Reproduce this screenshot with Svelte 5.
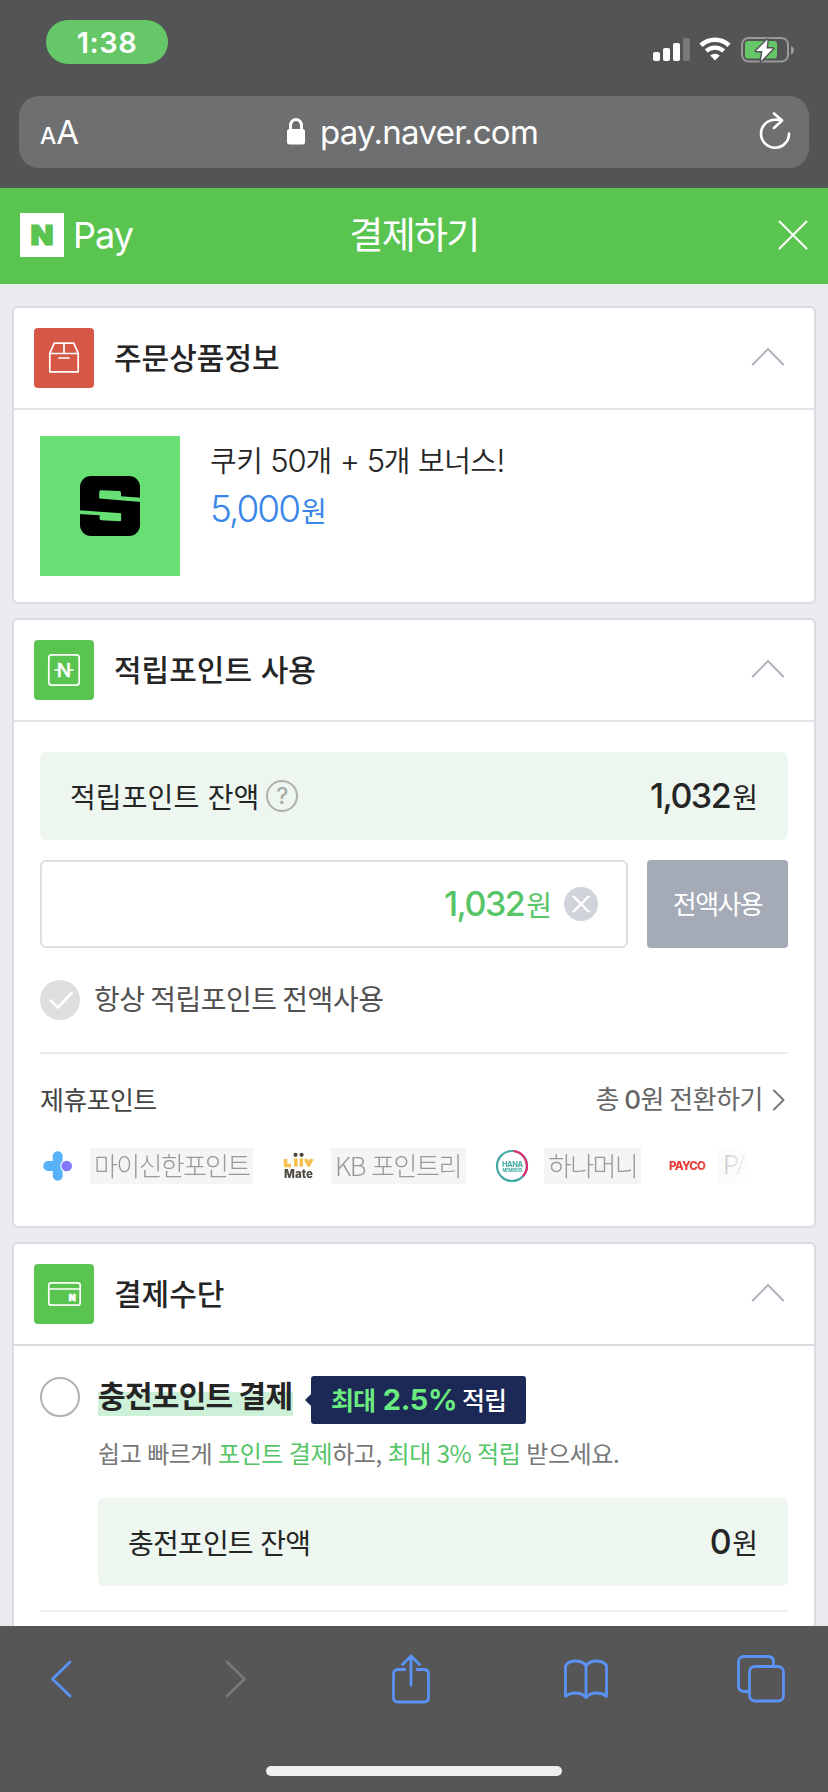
<script lang="ts">
	const signal = [9, 13, 18, 23];

	let point = $state<number>(1032);
	let always_use = $state<boolean>(true);

	const format = (value: number) => value.toLocaleString("en-US");
</script>

{#snippet arrow()}
	<svg class="arrow" width="34" height="20" viewBox="0 0 34 20">
		<path d="M2.800 17.500 18 2l15.200 15.500" />
	</svg>
{/snippet}

<div class="phone">
	<div class="status">
		<span class="time">1:38</span>
		<div class="indicators">
			<div class="signal">
				{#each signal as height, i}
					<i class:off={i === 3} style:height="{height}px"></i>
				{/each}
			</div>
			<svg class="wifi" width="32" height="24" viewBox="0 0 32 24">
				<path d="M2 8.300a20.500 20.500 0 0 1 28 0" stroke-width="4.600" />
				<path d="M7.300 14a12.800 12.800 0 0 1 17.400 0" stroke-width="4.200" />
				<path class="dot" d="M11.200 18.600a7 7 0 0 1 9.600 0L16 23.600z" />
			</svg>
			<svg class="battery" width="54" height="26" viewBox="0 0 54 26">
				<rect class="shell" x="1" y="1" width="46" height="23.500" rx="6.500" />
				<path class="cap" d="M50 9v8.500q3-1 3-4.250T50 9z" />
				<rect class="level" x="4" y="4" width="32" height="17.500" rx="3" />
				<path
					class="bolt"
					d="M26.500 2.500 15 14h6.500L20 24 32 11.500h-6.500z"
				/>
			</svg>
		</div>
	</div>

	<div class="address">
		<div class="field">
			<span class="text-size"><small>A</small>A</span>
			<div class="host">
				<svg width="18" height="27" viewBox="0 0 18 27">
					<path d="M3.500 12V7.500a5.500 6 0 0 1 11 0V12" />
					<rect x="0" y="11" width="18" height="15.500" rx="2.500" />
				</svg>
				<span>pay.naver.com</span>
			</div>
			<svg class="reload" width="32" height="38" viewBox="0 0 32 38">
				<path d="M30 21.500A14 14 0 1 1 16 7.700H22.500" />
				<path d="m15 1.500 8 7-8 7.500" />
			</svg>
		</div>
	</div>

	<header>
		<div class="logo">
			<svg width="44" height="44" viewBox="0 0 44 44">
				<rect width="44" height="44" />
				<text x="22" y="32" textLength="23" lengthAdjust="spacingAndGlyphs">N</text>
			</svg>
			<span>Pay</span>
		</div>
		<h1>결제하기</h1>
		<svg class="close" width="30" height="30" viewBox="0 0 30 30">
			<path d="m1.500 1.500 27 27m0-27-27 27" />
		</svg>
	</header>

	<main>
		<section class="card order">
			<div class="card-head">
				<div class="card-icon red">
					<svg width="60" height="60" viewBox="0 0 60 60">
						<path d="M15.800 25.500 20.200 15.200h19.600l4.400 10.300v18.300H15.800zM15.800 25.500h28.400M30 15.500v10M25 30h10" />
					</svg>
				</div>
				<h2>주문상품정보</h2>
				{@render arrow()}
			</div>
			<div class="product">
				<svg class="thumb" width="140" height="140" viewBox="0 0 140 140">
					<rect width="140" height="140" fill="#67df75" />
					<rect x="40" y="40" width="60" height="60" rx="11" fill="#000" />
					<path
						fill="#67df75"
						d="M61 54.200q-1.800 0-1.800 1.800v6.500l41.800 3.500v-4.300l-20-1.500v-3.500q0-1.600-1.600-1.700zM39 74.200l42.200 3v6.500q0 1.600-1.600 1.500l-18.200-.9q-1.800-.2-1.800-1.800v-3.200L39 78z"
					/>
				</svg>
				<div>
					<p class="product-name">쿠키 <b>50</b>개 <b>+</b> <b>5</b>개 보너스<b>!</b></p>
					<p class="price"><b>5,000</b>원</p>
				</div>
			</div>
		</section>

		<section class="card points">
			<div class="card-head">
				<div class="card-icon">
					<svg width="60" height="60" viewBox="0 0 60 60">
						<rect x="14.800" y="14.800" width="30.400" height="30.400" rx="3" />
						<path d="M21 30h4M35 30h4" />
						<text class="point-n" x="30" y="37.200">N</text>
					</svg>
				</div>
				<h2>적립포인트 사용</h2>
				{@render arrow()}
			</div>
			<div class="points-body">
				<div class="balance">
					<span>적립포인트 잔액</span>
					<i class="help">?</i>
					<strong><b>{format(point)}</b>원</strong>
				</div>
				<div class="use">
					<div class="input">
						<strong><b>{format(point)}</b>원</strong>
						<svg width="34" height="34" viewBox="0 0 34 34">
							<circle cx="17" cy="17" r="17" />
							<path d="m9.500 9.500 15 15m0-15-15 15" />
						</svg>
					</div>
					<button onclick={() => (point = 1032)}>전액사용</button>
				</div>
				<label class="always">
					<input type="checkbox" bind:checked={always_use} />
					<svg width="40" height="40" viewBox="0 0 40 40">
						<circle cx="20" cy="20" r="20" />
						<path d="m10.500 20.500 7.500 7L31.500 13" />
					</svg>
					<span>항상 적립포인트 전액사용</span>
				</label>
				<div class="partner-head">
					<span>제휴포인트</span>
					<div class="convert">
						<span>총 <b>0</b>원 전환하기</span>
						<svg width="14" height="22" viewBox="0 0 14 22">
							<path d="m2 1.500 9.500 9.500L2 20.500" />
						</svg>
					</div>
				</div>
				<div class="partners">
					<svg width="50" height="36" viewBox="0 0 50 36">
						<path
							fill="#59b1f8"
							d="M12.700 8.200a5 5 0 0 1 10 0v4.300q-5 5.500 0 11v4.300a5 5 0 0 1-10 0v-4.700H8.300a5.100 5.100 0 0 1 0-10.200h4.400z"
						/>
						<circle cx="26.700" cy="18" r="5.300" fill="#8277f8" />
					</svg>
					<span class="tag shinhan">마이신한포인트</span>
					<svg class="liiv" width="52" height="36" viewBox="0 0 52 36">
						<path d="M5.500 11v6.500H11M15.800 10.500v8M21.300 10.500v8M25.500 11l3.200 6 3.300-6" />
						<circle cx="15.500" cy="6.800" r="2.100" />
						<circle cx="21.600" cy="6.800" r="2.100" />
						<text x="4" y="29.800" textLength="29">Mate</text>
					</svg>
					<span class="tag kb">KB 포인트리</span>
					<svg class="hana" width="52" height="36" viewBox="0 0 52 36">
						<circle cx="20" cy="18" r="15" />
						<path d="M22.500 3.200A15 15 0 0 1 31.500 27.500" />
						<text x="10" y="19" font-size="7.500" textLength="21">HANA</text>
						<text x="10.500" y="23.800" font-size="4.200" textLength="20">MEMBERS</text>
					</svg>
					<span class="tag hana-money">하나머니</span>
					<svg class="payco" width="50" height="36" viewBox="0 0 50 36">
						<text x="0" y="22.300" textLength="37">PAYCO</text>
					</svg>
					<span class="tag payco-tag">PAYCO</span>
				</div>
			</div>
		</section>

		<section class="card method">
			<div class="card-head">
				<div class="card-icon">
					<svg width="60" height="60" viewBox="0 0 60 60">
						<rect x="14.800" y="18.800" width="31.400" height="22.400" rx="2.500" />
						<path d="M15 25h31" />
						<text class="card-n" x="38.200" y="37" textLength="8.500">N</text>
					</svg>
				</div>
				<h2>결제수단</h2>
				{@render arrow()}
			</div>
			<div class="method-body">
				<i class="radio"></i>
				<div class="method-info">
					<div class="method-title">
						<h3>충전포인트 결제</h3>
						<div class="badge"><em>최대 <b>2.5%</b></em> 적립</div>
					</div>
					<p class="desc">
						쉽고 빠르게 <em>포인트 결제</em>하고, <em>최대 3% 적립</em> 받으세요.
					</p>
					<div class="balance charge">
						<span>충전포인트 잔액</span>
						<strong><b>0</b>원</strong>
					</div>
				</div>
			</div>
		</section>
	</main>

	<nav>
		<div class="tools">
			<svg width="22" height="38" viewBox="0 0 22 38">
				<path d="M20 2 2.500 19 20 36" />
			</svg>
			<svg class="disabled" width="22" height="38" viewBox="0 0 22 38">
				<path d="m2 2 17.500 17L2 36" />
			</svg>
			<svg width="38" height="50" viewBox="0 0 38 50">
				<path d="M13 15.500H6q-4.500 0-4.500 4.500v23.500Q1.500 48 6 48h26q4.500 0 4.500-4.500V20q0-4.500-4.500-4.500h-7M19 31V2M10.500 10.500 19 2l8.500 8.500" />
			</svg>
			<svg width="44" height="40" viewBox="0 0 44 40">
				<path d="M22 6.500Q18 2 11.500 2T1.500 6.500v31Q5 34 11.500 34T22 38.500V6.500Q26 2 32.500 2t10 4.500v31Q39 34 32.500 34T22 38.500" />
			</svg>
			<svg width="48" height="48" viewBox="0 0 48 48">
				<path d="M12 36.500H7q-5.500 0-5.500-5.500V7Q1.500 1.500 7 1.500h24q5.500 0 5.500 5.500v4.500" />
				<rect x="12.500" y="11.500" width="34" height="34.500" rx="5.500" />
			</svg>
		</div>
		<div class="home"></div>
	</nav>
</div>

<style>
	:global(body) {
		background-color: #e9ebef;
		overflow: hidden;
	}
	.phone {
		--green: #5ac451;
		--line: #d8dbe0;

		display: flex;
		flex-direction: column;
		width: 828px;
		height: 1792px;
		overflow: hidden;
		background-color: #e9ebef;
		color: #252525;
		font-family: "Noto Sans CJK KR", sans-serif;
		line-height: 1;
		white-space: nowrap;
	}
	svg {
		display: block;
		flex: none;
		fill: none;
		stroke-linecap: round;
		stroke-linejoin: round;
	}
	h1,
	h2,
	h3,
	p {
		margin: 0;
	}
	b,
	.time,
	.text-size,
	.host,
	.logo span {
		font-family: Inter, "Noto Sans CJK KR", sans-serif;
	}
	em,
	i {
		font-style: normal;
	}

	.status {
		display: flex;
		flex: none;
		justify-content: space-between;
		box-sizing: border-box;
		height: 96px;
		padding: 20px 33px 0 46px;
		background-color: #535456;
	}
	.time {
		width: 122px;
		height: 44px;
		border-radius: 22px;
		background-color: #65c767;
		color: #fff;
		font-size: 29px;
		font-weight: 600;
		letter-spacing: 0.5px;
		line-height: 45px;
		text-align: center;
	}
	.indicators {
		display: flex;
		align-items: flex-start;
		padding-top: 17px;
	}
	.signal {
		display: flex;
		align-items: flex-end;
		gap: 3px;
		height: 24px;
		margin-right: 9px;

		i {
			width: 7px;
			border-radius: 2px;
			background-color: #fff;
		}
		.off {
			background-color: #79797b;
		}
	}
	.wifi {
		stroke: #fff;
		stroke-linecap: butt;
		margin-right: 10px;

		.dot {
			fill: #fff;
			stroke: none;
		}
	}
	.battery {
		.shell {
			stroke: #98999a;
			stroke-width: 2;
		}
		.cap {
			fill: #98999a;
		}
		.level {
			fill: #65c767;
		}
		.bolt {
			fill: #fff;
			stroke: #535456;
			stroke-width: 3;
			paint-order: stroke;
		}
	}

	.address {
		flex: none;
		height: 92px;
		padding: 0 19px;
		background-color: #535456;
	}
	.field {
		display: grid;
		grid-template-columns: 1fr auto 1fr;
		align-items: center;
		box-sizing: border-box;
		height: 72px;
		padding: 0 18px 0 21px;
		border-radius: 20px;
		background-color: #6e6f71;
		color: #fff;
	}
	.text-size {
		font-size: 33px;
		line-height: 40px;
		padding-top: 3px;

		small {
			font-size: 23px;
			font-weight: 500;
		}
	}
	.host {
		display: flex;
		align-items: center;
		gap: 15px;
		margin-right: 6px;
		font-size: 33px;
		line-height: 40px;

		svg {
			fill: #fff;
			margin-bottom: 1px;
		}
		path {
			fill: none;
			stroke: #fff;
			stroke-width: 3;
		}
		span {
			letter-spacing: -0.7px;
		}
	}
	.reload {
		justify-self: end;
		margin-bottom: 2px;
		stroke: #fff;
		stroke-width: 2.6;
	}

	header {
		display: grid;
		flex: none;
		grid-template-columns: 1fr auto 1fr;
		align-items: center;
		box-sizing: border-box;
		height: 96px;
		padding: 0 20px;
		background-color: var(--green);
		color: #fff;
	}
	.logo {
		display: flex;
		align-items: center;
		gap: 9px;
		margin-bottom: 2px;

		rect {
			fill: #fff;
		}
		text {
			fill: var(--green);
			stroke: var(--green);
			stroke-width: 1.2;
			stroke-linejoin: miter;
			font-family: Inter, sans-serif;
			font-size: 27px;
			font-weight: 900;
			text-anchor: middle;
		}
		span {
			font-size: 36px;
			letter-spacing: -1px;
		}
	}
	h1 {
		margin-bottom: 5px;
		font-size: 37px;
		font-weight: 400;
		letter-spacing: -1.7px;
	}
	.close {
		justify-self: end;
		margin-bottom: 2px;
		stroke: #fff;
		stroke-width: 2;
	}

	main {
		display: flex;
		flex: 1;
		flex-direction: column;
		gap: 14px;
		min-height: 0;
		overflow: hidden;
		padding: 22px 12px 0;
	}
	.card {
		flex: none;
		box-sizing: border-box;
		border: 2px solid var(--line);
		border-radius: 6px;
		background-color: #fff;
	}
	.order {
		height: 298px;
	}
	.points {
		height: 610px;
	}
	.method {
		height: 500px;
	}
	.card-head {
		display: flex;
		align-items: center;
		height: 100px;
		padding: 0 30px 0 20px;
		border-bottom: 2px solid #dfe4e8;

		h2 {
			flex: 1;
			margin: 0 0 5px 20px;
			font-size: 30px;
			font-weight: 500;
			word-spacing: 2px;
		}
	}
	.method .card-head {
		border-color: var(--line);
	}
	.card-icon {
		border-radius: 4px;
		background-color: var(--green);
		stroke: #fff;
		stroke-width: 1.7;

		text {
			fill: #fff;
			font-family: Inter, sans-serif;
			text-anchor: middle;
		}
		.point-n {
			stroke-width: 0.4;
			font-size: 19px;
			font-weight: 500;
		}
		.card-n {
			stroke-width: 0.6;
			font-size: 9px;
			font-weight: 900;
		}
	}
	.red {
		background-color: #d65745;
	}
	.arrow {
		margin-bottom: 3px;
		stroke: #b0b3c2;
		stroke-width: 2;
	}

	.product {
		display: flex;
		gap: 30px;
		padding: 26px;
	}
	.product-name {
		margin-top: 9px;
		font-size: 29px;
		font-weight: 350;
		letter-spacing: -0.5px;
		word-spacing: 2px;

		b {
			font-weight: 300;
			font-size: 31px;
			letter-spacing: -1.2px;
		}
	}
	.price {
		margin-top: 14px;
		color: #3a86e8;
		font-size: 28px;

		b {
			margin-right: 2px;
			font-size: 37px;
			font-weight: 300;
			letter-spacing: -2px;
		}
	}

	.points-body {
		padding: 30px 26px 0;
	}
	.balance {
		display: flex;
		align-items: center;
		box-sizing: border-box;
		height: 88px;
		padding: 0 30px;
		border-radius: 6px;
		background-color: #edf7f0;
		font-size: 28px;
		letter-spacing: 0.1px;
		word-spacing: 2px;

		strong {
			margin-left: auto;
		}
	}
	strong {
		font-size: 28px;
		font-weight: 400;

		b {
			margin-right: 2px;
			font-size: 34px;
			font-weight: 500;
			letter-spacing: -1.5px;
		}
	}
	.help {
		display: grid;
		place-items: center;
		box-sizing: border-box;
		width: 32px;
		height: 32px;
		margin-left: 7px;
		border: 2px solid #adb0ae;
		border-radius: 50%;
		color: #a9aba9;
		font-family: Inter, sans-serif;
		font-size: 23px;
		font-weight: 500;
	}
	.use {
		display: flex;
		gap: 19px;
		margin-top: 20px;

		button {
			width: 141px;
			height: 88px;
			padding: 0 0 3px;
			border: 0;
			border-radius: 4px;
			background-color: #a4aab6;
			color: #fff;
			font: inherit;
			font-size: 26px;
			letter-spacing: -1.6px;
		}
	}
	.input {
		display: flex;
		flex: 1;
		align-items: center;
		justify-content: flex-end;
		gap: 12px;
		box-sizing: border-box;
		height: 88px;
		padding-right: 28px;
		border: 2px solid #dedfe0;
		border-radius: 6px;
		color: #55c567;

		circle {
			fill: #d1d3da;
		}
		path {
			stroke: #fff;
			stroke-width: 2.4;
		}
	}
	.always {
		display: flex;
		align-items: center;
		gap: 14px;
		height: 104px;
		border-bottom: 2px solid #ebebeb;
		color: #515151;
		font-size: 28px;
		letter-spacing: -0.5px;

		input {
			display: none;
		}
		span {
			margin-bottom: 5px;
		}
		circle {
			fill: #dedede;
		}
		path {
			stroke: #fff;
			stroke-width: 2.6;
		}
	}
	.partner-head {
		display: flex;
		justify-content: space-between;
		align-items: center;
		height: 94px;
		color: #444;
		font-size: 26px;
		letter-spacing: -0.6px;

		span {
			margin-bottom: 4px;
		}
	}
	.convert {
		display: flex;
		align-items: center;
		color: #666;
		letter-spacing: -0.5px;

		b {
			font-weight: 500;
		}
		svg {
			margin: 0 2px 2px 9px;
			stroke: #777;
			stroke-width: 2;
		}
	}
	.partners {
		display: flex;
		width: 712px;
		margin: -6px 0;
		padding: 6px 0;
		overflow: hidden;
		-webkit-mask-image: linear-gradient(to right, #000 660px, transparent 710px);
		mask-image: linear-gradient(to right, #000 660px, transparent 710px);
	}
	.tag {
		flex: none;
		box-sizing: border-box;
		height: 36px;
		padding-left: 4px;
		background-color: #f4f6f5;
		color: #999;
		font-size: 26px;
		font-weight: 300;
		letter-spacing: -1.7px;
		line-height: 33px;
	}
	.shinhan {
		width: 163px;
		margin-right: 26px;
	}
	.kb {
		width: 135px;
		margin-right: 26px;
		letter-spacing: -1.5px;
		word-spacing: 2px;
	}
	.hana-money {
		width: 97px;
		margin-right: 28px;
	}
	.payco-tag {
		width: 92px;
		font-family: Inter, sans-serif;
	}
	.liiv {
		margin-left: 1px;
		margin-right: -1px;

		path {
			stroke: #f7bf50;
			stroke-width: 3.6;
			stroke-linecap: butt;
		}
		circle {
			fill: #4c483f;
		}
		text {
			fill: #4c483f;
			font-family: Inter, sans-serif;
			font-size: 11.5px;
			font-weight: 800;
		}
	}
	.hana {
		circle {
			stroke: #43aaa3;
			stroke-width: 2.2;
		}
		path {
			stroke: #df2e70;
			stroke-width: 2.2;
		}
		text {
			fill: #43aaa3;
			font-family: Inter, sans-serif;
			font-weight: 700;
		}
	}
	.payco text {
		fill: #e73d39;
		font-family: Inter, sans-serif;
		font-size: 11.5px;
		font-weight: 800;
	}

	.method-body {
		display: flex;
		gap: 18px;
		margin: 0 26px;
		padding: 30px 0 24px;
		border-bottom: 2px solid #eee;
	}
	.radio {
		box-sizing: border-box;
		width: 40px;
		height: 40px;
		margin-top: 1px;
		border: 2px solid #b2b2b2;
		border-radius: 50%;
	}
	.method-info {
		flex: 1;
	}
	.method-title {
		display: flex;
		gap: 18px;
		height: 48px;

		h3 {
			width: 195px;
			height: 30px;
			padding-top: 4px;
			font-size: 30px;
			font-weight: 700;
			letter-spacing: -0.7px;
			line-height: 29px;
			border-bottom: 6px solid #ccf1d8;
			background: linear-gradient(transparent 16px, #ccf1d8 16px);
		}
	}
	.badge {
		position: relative;
		box-sizing: border-box;
		width: 215px;
		height: 48px;
		padding-left: 20px;
		border-radius: 3px;
		background-color: #1c2855;
		color: #fff;
		font-size: 25px;
		font-weight: 500;
		letter-spacing: -1px;
		line-height: 46px;

		&::before {
			content: "";
			position: absolute;
			top: 18px;
			left: -6px;
			border: 6px solid transparent;
			border-left: 0;
			border-right-color: #1c2855;
		}
		em {
			color: #6aeb80;
			font-weight: 700;
			word-spacing: 3px;
		}
		b {
			font-size: 29px;
			font-weight: 700;
			letter-spacing: -0.3px;
		}
	}
	.desc {
		margin-top: 16px;
		color: #777;
		font-size: 24px;
		letter-spacing: -0.4px;
		line-height: 26px;
		word-spacing: 0.8px;

		em {
			color: #55c567;
		}
	}
	.charge {
		margin-top: 32px;

		span {
			letter-spacing: -0.8px;
		}
	}

	nav {
		display: flex;
		flex: none;
		flex-direction: column;
		align-items: center;
		justify-content: space-between;
		box-sizing: border-box;
		height: 166px;
		padding: 28px 0 16px;
		background-color: #565656;
	}
	.tools {
		display: grid;
		grid-template-columns: repeat(5, 175px);
		align-items: center;
		align-self: flex-start;
		justify-items: center;
		margin-left: -27px;
		stroke: #5a92f5;
		stroke-width: 2.8;
	}
	.disabled {
		stroke: #777;
	}
	.home {
		width: 296px;
		height: 10px;
		border-radius: 5px;
		background-color: #efefef;
	}
</style>
